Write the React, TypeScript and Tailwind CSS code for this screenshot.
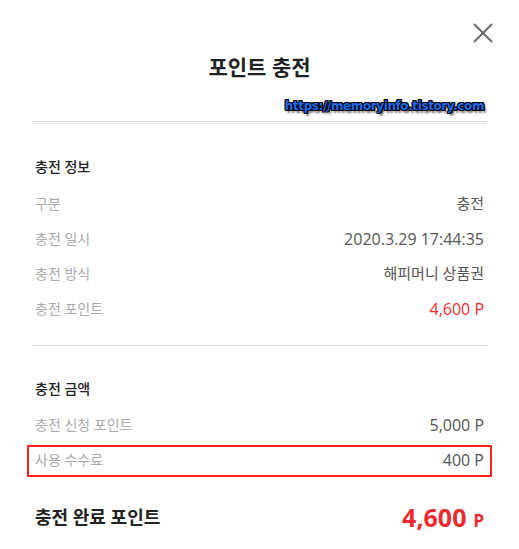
import { X } from 'lucide-react';

type Row = { label: string; value: string; accent?: boolean; num?: boolean };

const info: Row[] = [
  { label: '구분', value: '충전' },
  { label: '충전 일시', value: '2020.3.29 17:44:35', num: true },
  { label: '충전 방식', value: '해피머니 상품권' },
  { label: '충전 포인트', value: '4,600 P', accent: true, num: true },
];

function InfoRow({ label, value, accent, num }: Row) {
  const size = num ? 'text-[16px]' : 'text-[15px]';
  const color = accent ? 'text-[#ee2a2f]' : 'text-[#555555]';
  return (
    <div className="flex h-[35px] items-center justify-between px-[3px]">
      <span className="text-[14px] text-[#aaaaaa]">{label}</span>
      <span className={`font-['Open_Sans','Noto_Sans_CJK_KR',sans-serif] ${size} ${color}`}>{value}</span>
    </div>
  );
}

export default function App() {
  return (
    <main className="relative h-[549px] w-full overflow-hidden bg-white font-['Noto_Sans','Noto_Sans_CJK_KR',sans-serif] text-[#222]">
      {/* close button */}
      <button className="absolute right-[19px] top-[16px] text-[#666]" aria-label="close">
        <X size={34} strokeWidth={1.3} />
      </button>

      <div className="px-[32px]">
        {/* title */}
        <h1 className="pt-[53px] text-center text-[21px] font-bold leading-[28px] text-[#222]">
          포인트 충전
        </h1>

        {/* watermark */}
        <div className="mt-[17px] flex justify-end pr-[3px]">
          <span className="font-['DejaVu_Sans',sans-serif] text-[12px] font-bold leading-[16px] tracking-[-0.4px] text-[#1a6cf0] [text-shadow:1px_0_0_#000,-1px_0_0_#000,0_1px_0_#000,0_-1px_0_#000,1px_1px_0_#000,-1px_-1px_0_#000,1px_-1px_0_#000,-1px_1px_0_#000,2px_3px_2px_#666]">
            https://memoryinfo.tistory.com
          </span>
        </div>

        {/* double divider */}
        <div className="mt-[7px] h-[3px] border-y border-t-[#d9d9d9] border-b-[#e4e4e4]" />

        {/* section: 충전 정보 */}
        <section className="pt-[32px]">
          <h2 className="px-[3px] text-[14px] font-medium leading-[22px] text-[#222]">충전 정보</h2>
          <div className="mt-[8px]">
            {info.map((r) => (
              <InfoRow key={r.label} {...r} />
            ))}
          </div>
        </section>

        <div className="mt-[19px] border-t border-[#dddddd]" />

        {/* section: 충전 금액 */}
        <section className="pt-[32px]">
          <h2 className="px-[3px] text-[14px] font-medium leading-[22px] text-[#222]">충전 금액</h2>
          <div className="mt-[7px]">
            <InfoRow label="충전 신청 포인트" value="5,000 P" num />
            <div className="-mx-[5px] mt-[3px] flex h-[32px] items-center justify-between border-2 border-[#ff2020] px-[6px] pb-[3px]">
              <span className="text-[14px] text-[#aaaaaa]">사용 수수료</span>
              <span className="font-['Open_Sans',sans-serif] text-[16px] text-[#555555]">400 P</span>
            </div>
          </div>
        </section>

        {/* total */}
        <div className="mt-[24px] flex items-center justify-between px-[3px]">
          <span className="text-[18px] font-bold text-[#222]">충전 완료 포인트</span>
          <span className="flex items-baseline gap-[7px] font-bold text-[#ee2a2f]">
            <span className="text-[25px] leading-[32px]">4,600</span>
            <span className="text-[17px]">P</span>
          </span>
        </div>
      </div>
    </main>
  );
}
